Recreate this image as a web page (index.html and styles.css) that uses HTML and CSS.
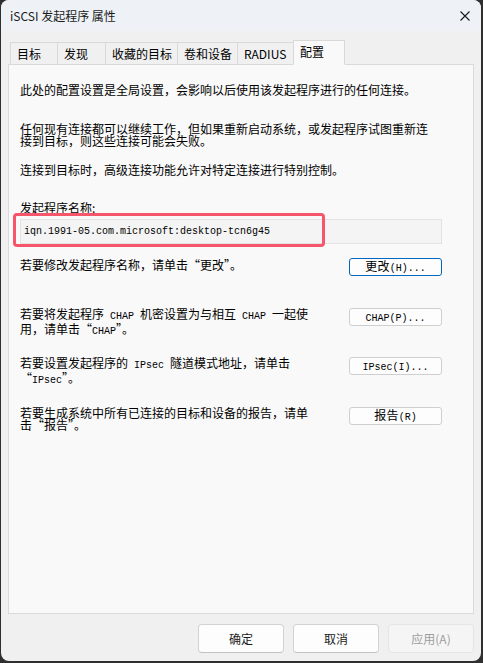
FILE: index.html
```html
<!DOCTYPE html>
<html lang="zh-CN">
<head>
<meta charset="utf-8">
<title>iSCSI 发起程序 属性</title>
<link rel="stylesheet" href="styles.css">
</head>
<body>
<div class="window">
  <div class="titlebar">
    <span class="title">iSCSI 发起程序 属性</span>
    <svg class="close" width="10" height="10" viewBox="0 0 10 10"><path d="M0.5 0.5L9.5 9.5M9.5 0.5L0.5 9.5" stroke="#1b1b1b" stroke-width="1.1" fill="none"/></svg>
  </div>
  <div class="content">
    <div class="tabs">
      <div class="tab t1">目标</div>
      <div class="tab t2">发现</div>
      <div class="tab t3">收藏的目标</div>
      <div class="tab t4">卷和设备</div>
      <div class="tab t5">RADIUS</div>
      <div class="tab t6 active">配置</div>
    </div>
    <div class="panel">
      <p class="p1">此处的配置设置是全局设置，会影响以后使用该发起程序进行的任何连接。</p>
      <p class="p2">任何现有连接都可以继续工作，但如果重新启动系统，或发起程序试图重新连<br>接到目标，则这些连接可能会失败。</p>
      <p class="p3">连接到目标时，高级连接功能允许对特定连接进行特别控制。</p>
      <p class="label">发起程序名称:</p>
      <div class="field">
        <div class="textbox">iqn.1991-05.com.microsoft:desktop-tcn6g45</div>
        <div class="highlight"></div>
      </div>
      <div class="row first">
        <p class="rtext single">若要修改发起程序名称，请单击“更改”。</p>
        <button class="btn default">更改<span class="lat">(H)...</span></button>
      </div>
      <div class="row">
        <p class="rtext">若要将发起程序<span class="lat"> CHAP </span>机密设置为与相互<span class="lat"> CHAP </span>一起使<br>用，请单击“<span class="lat">CHAP</span>”。</p>
        <button class="btn"><span class="lat">CHAP(P)...</span></button>
      </div>
      <div class="row">
        <p class="rtext">若要设置发起程序的<span class="lat"> IPsec </span>隧道模式地址，请单击<br>“<span class="lat">IPsec</span>”。</p>
        <button class="btn"><span class="lat">IPsec(I)...</span></button>
      </div>
      <div class="row">
        <p class="rtext">若要生成系统中所有已连接的目标和设备的报告，请单<br>击“报告”。</p>
        <button class="btn">报告<span class="lat">(R)</span></button>
      </div>
    </div>
    <div class="footer">
      <button class="fbtn">确定</button>
      <button class="fbtn">取消</button>
      <button class="fbtn disabled">应用(A)</button>
    </div>
  </div>
</div>
</body>
</html>
```
FILE: styles.css
```css
* { box-sizing: border-box; }
html, body { margin: 0; padding: 0; }
body {
  background: #2f2f2f;
  width: 483px;
  height: 663px;
  overflow: hidden;
  font-family: "Noto Sans CJK SC", "Liberation Sans", sans-serif;
  color: #000;
}
.window {
  margin-left: 1px;
  width: 480px;
  height: 661px;
  border-radius: 8px;
  background: #f0f0f0;
  overflow: hidden;
  display: flex;
  flex-direction: column;
}
.titlebar {
  height: 31px;
  background: #eef2f7;
  display: flex;
  align-items: center;
  padding: 0 10px 0 9px;
  justify-content: space-between;
}
.title {
  font-size: 12px;
  color: #1a1a1a;
  line-height: 16px;
}
.close { margin-right: 1px; }
.content {
  padding: 9px 0 0 7px;
  display: flex;
  flex-direction: column;
}
.tabs {
  display: flex;
  align-items: flex-end;
  height: 25px;
  margin-left: 2px;
  margin-bottom: -1px;
  position: relative;
  z-index: 1;
}
.tab {
  height: 23px;
  border: 1px solid #d9d9d9;
  background: #f0f0f0;
  font-size: 12px;
  line-height: 16px;
  padding-left: 6px;
  display: flex;
  align-items: center;
  margin-left: -1px;
  white-space: nowrap;
}
.tab.t1 { width: 48px; margin-left: 0; }
.tab.t2 { width: 49px; }
.tab.t3 { width: 73px; }
.tab.t4 { width: 61px; }
.tab.t5 { width: 57px; }
.tab.t6 { width: 52px; }
.tab.active {
  height: 25px;
  background: #f9f9f9;
  border-bottom-color: #f9f9f9;
  padding-bottom: 1px;
}
.panel {
  width: 466px;
  height: 550px;
  border: 1px solid #dadada;
  background: #f9f9f9;
  padding: 19px 31px 0 11px;
  font-size: 12px;
  line-height: 12px;
  letter-spacing: 0;
}
.panel p { margin: 0; white-space: nowrap; }
.lat {
  font-family: "Liberation Mono", monospace;
  font-size: 10px;
  letter-spacing: 0;
  white-space: pre;
}
.p2 { margin-top: 27px !important; }
.p3 { margin-top: 17px !important; }
.label { margin-top: 26px !important; }
.field {
  position: relative;
  margin-top: 5px;
}
.textbox {
  height: 25px;
  border: 1px solid #e3e3e3;
  background: #f4f4f4;
  font-family: "Liberation Mono", monospace;
  font-size: 10px;
  letter-spacing: 0;
  line-height: 23px;
  padding-left: 3px;
  color: #000;
}
.highlight {
  position: absolute;
  left: -7px;
  top: -6px;
  width: 312px;
  height: 34px;
  border: 3px solid #f5566a;
  border-radius: 4px;
}
.row {
  display: flex;
  align-items: flex-start;
  justify-content: space-between;
  height: 49.5px;
}
.row.first { margin-top: 14px; }
.rtext { padding-top: 0; }
.rtext.single { padding-top: 1px; }
.btn {
  width: 93px;
  height: 18px;
  margin: 0 0 0 auto;
  padding: 0;
  border: 1px solid #cfcfcf;
  border-radius: 3px;
  background: #fdfdfd;
  font-family: "Noto Sans CJK SC", sans-serif;
  font-size: 12px;
  line-height: 14px;
  color: #000;
  letter-spacing: 0.3px;
}
.btn.default { border-color: #0067c0; }
.footer {
  display: flex;
  justify-content: flex-end;
  gap: 9px;
  margin-top: 10px;
  padding-right: 7px;
}
.fbtn {
  width: 86px;
  height: 29px;
  border: 1px solid #d3d3d3;
  border-bottom-color: #c2c2c2;
  border-radius: 4px;
  background: #fdfdfd;
  font-family: "Noto Sans CJK SC", sans-serif;
  font-size: 12px;
  color: #1a1a1a;
  padding: 0;
}
.fbtn.disabled {
  background: #f5f5f5;
  border-color: #e5e5e5;
  color: #9e9e9e;
}
```
